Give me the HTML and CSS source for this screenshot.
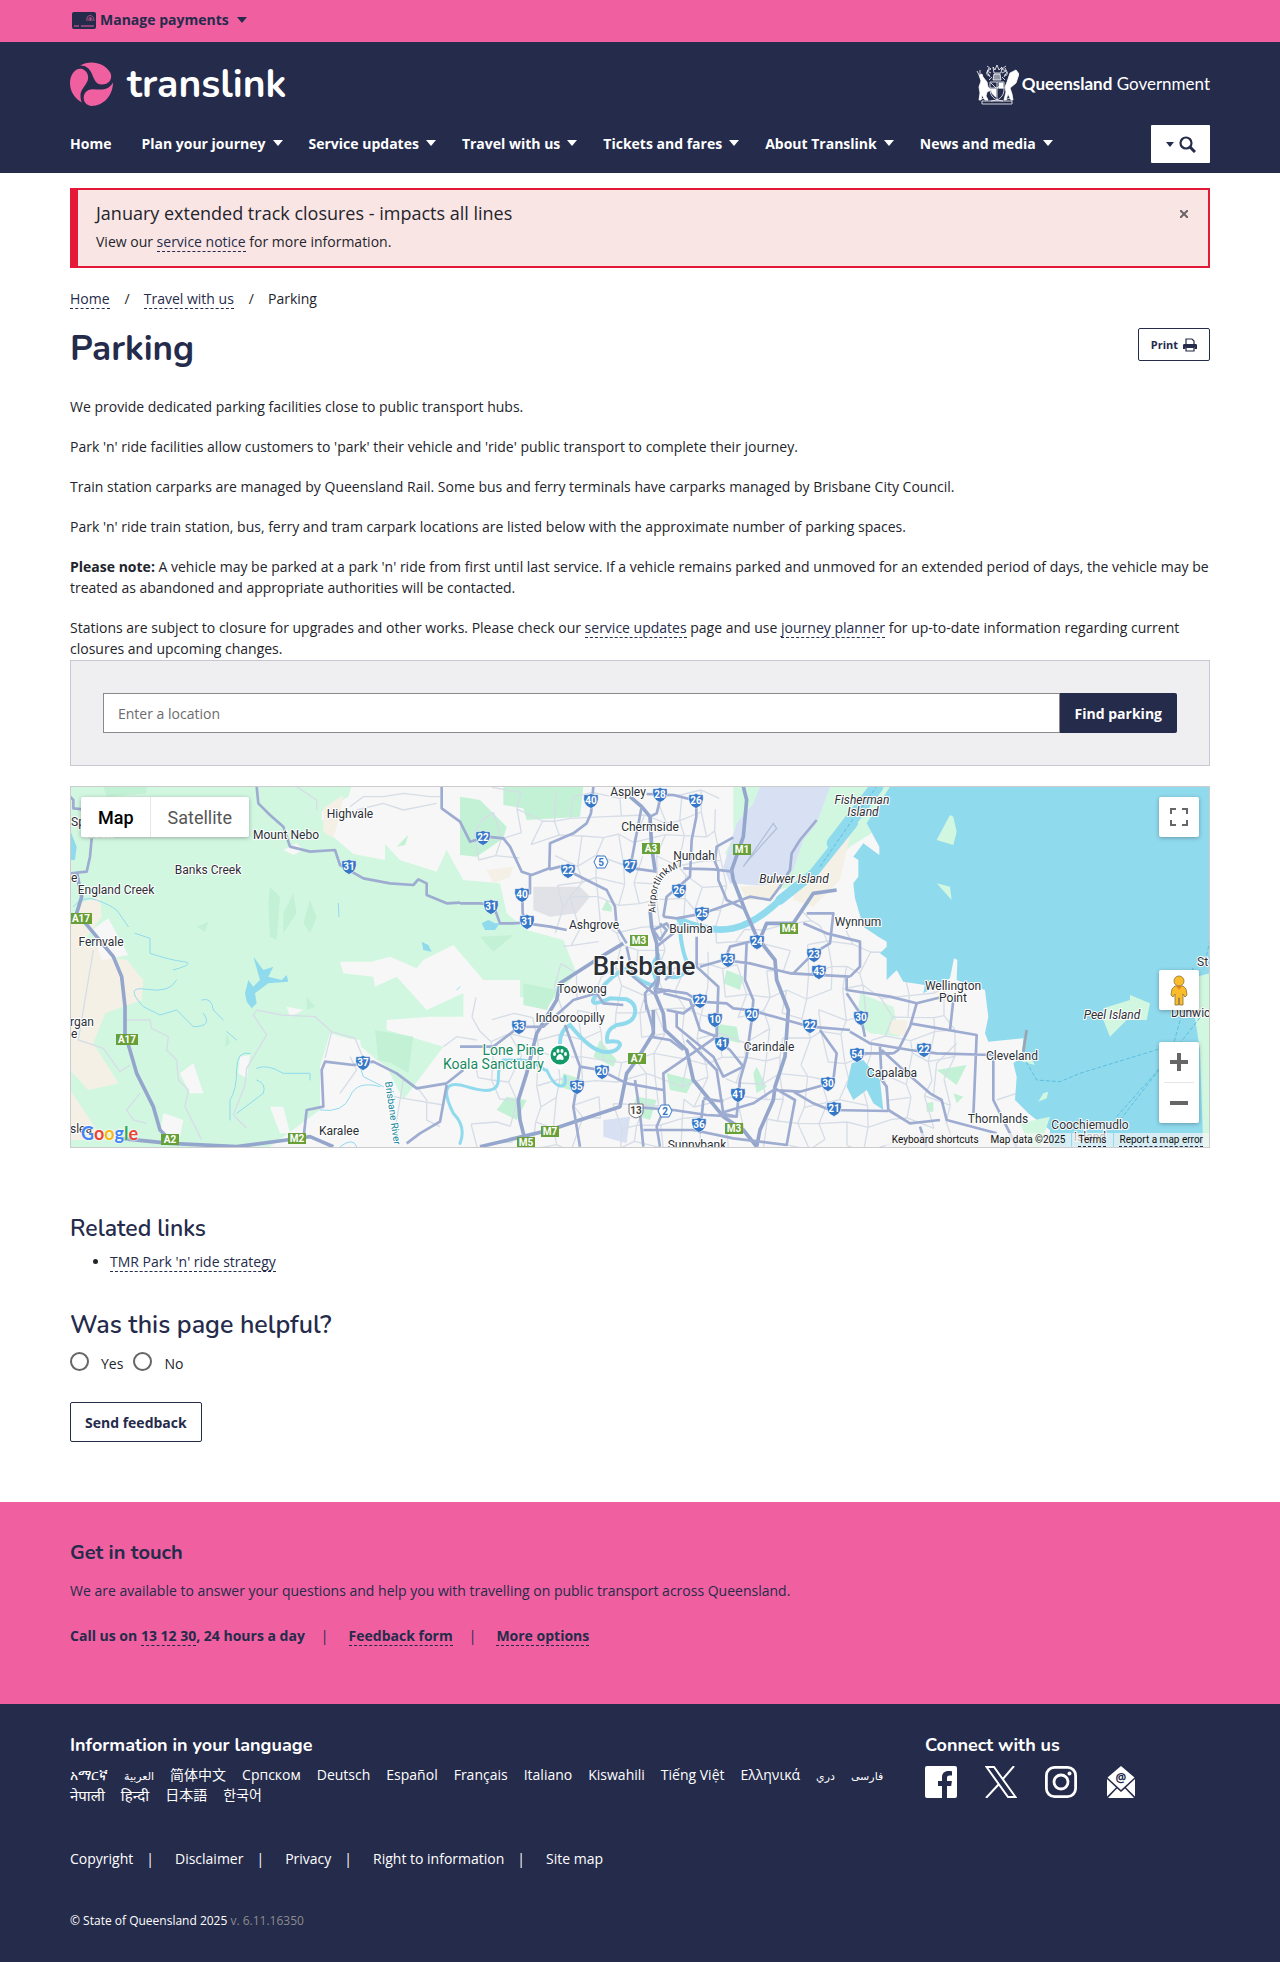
FILE: index.html
```html
<!DOCTYPE html>
<html lang="en">
<head>
<meta charset="utf-8">
<title>Parking | Translink</title>
<meta name="viewport" content="width=device-width, initial-scale=1">
<link rel="stylesheet" href="styles.css">
</head>
<body>
<div class="topbar">
  <div class="container">
    <button class="payments" type="button">
      <svg class="card-icon" viewBox="0 0 24 17" aria-hidden="true"><rect width="24" height="17" rx="2" fill="#252b4b"/><path d="M2 14h5M9 14h13" stroke="#f060a1" stroke-width="1"/><path d="M15 7c0-5 7-5 7 2M17 9V7c0-3 3-2 3 2M18.500 6v3M15 9v-2" fill="none" stroke="#f060a1" stroke-width=".7"/></svg>
      Manage payments <span class="caret"></span>
    </button>
  </div>
</div>
<header class="masthead">
  <div class="container">
    <div class="brand-row">
      <a class="brand" href="#">
        <svg class="brand-mark" viewBox="0 0 43 44" aria-hidden="true" fill="#f060a1"><path d="M10 3.500C20-2 34 0 40.500 11C43 18 38 23 31 22.500C25 22 24 16 21 10C19 6 15 3 10 3.500Z"/><path d="M12.500 7C17 9 19.500 14 17.500 19C15 25 10 28 10.500 34C10.500 37 11 39 12 40.500C4 36 0 29 0 21C0 13 5 5 12.500 7Z"/><path d="M43 20.500C43 32 35 44 21 44C14 43 12 36 15 31C19 25 25 28 32 27.500C38 27 41 24 43 20.500Z"/></svg>
        <span class="brand-name">translink</span>
      </a>
      <a class="govt" href="#">
        <svg class="crest" viewBox="0 0 43 42" aria-hidden="true" fill="none" stroke="#fff" stroke-width=".8"><path d="M17 4l2 3 2-5 2 5 3-3-1 6h-7zM11 3l4 3-4 2 4 2M30 3l-4 3 4 2-4 2M14 12c-3 1-4-1-3-3M28 12c3 1 4-1 3-3M13 5l-2 4 3 5M29 5l2 4-3 5M16 14l-3 3M26 14l3 3M1 8l2 4M4 7l0 4"/><path d="M18 11h6l1 6h-8z" fill="#fff" fill-opacity=".5"/><path d="M14 19h14v7c0 6-3 9-7 11c-4-2-7-5-7-11zM21 19v18M14 25h14M15 20l5 5M27 20l-6 5"/><path d="M15 26h5v8c-3-2-5-4-5-8zM23 20h4v5h-4z" fill="#fff"/><path d="M3 12l3-1 1 3 4 5 1 5 3 3-4 2-1 4 2 4H9l-3-5-1 5H3l1-7-1-6 2-6z" fill="#fff"/><path d="M31 19l3-9 6-3 3 4-3 9-6 5 2 6 1 6h-2l-3-6-2 6h-2l2-8-1-5z" fill="#fff"/><path d="M6 38h30v3H6zM5 36c3-1 5-1 7 1M37 36c-3-1-5-1-7 1M15 38q6-2 12 0" /></svg>
        <span class="govt-name"><b>Queensland</b> Government</span>
      </a>
    </div>
    <nav class="nav-row" aria-label="Main">
      <ul class="nav">
        <li><a href="#">Home</a></li>
        <li><a href="#">Plan your journey<span class="caret"></span></a></li>
        <li><a href="#">Service updates<span class="caret"></span></a></li>
        <li><a href="#">Travel with us<span class="caret"></span></a></li>
        <li><a href="#">Tickets and fares<span class="caret"></span></a></li>
        <li><a href="#">About Translink<span class="caret"></span></a></li>
        <li><a href="#">News and media<span class="caret"></span></a></li>
      </ul>
      <button class="search-toggle" type="button" aria-label="Search"><span class="caret small"></span><svg width="17" height="17" viewBox="0 0 17 17" fill="none" stroke="#252b4b" aria-hidden="true"><circle cx="7" cy="7" r="5.500" stroke-width="2.200"/><path d="M11 11l5 5" stroke-width="3"/></svg></button>
    </nav>
  </div>
</header>

<main class="container">
  <section class="alert">
    <div>
      <h2 class="alert-title">January extended track closures - impacts all lines</h2>
      <p>View our <a class="link" href="#">service notice</a> for more information.</p>
    </div>
    <button class="alert-close" type="button" aria-label="Close"><svg width="8" height="8" viewBox="0 0 8 8" stroke="#6b6468" stroke-width="2" aria-hidden="true"><path d="M0 0l8 8M8 0l-8 8"/></svg></button>
  </section>

  <nav aria-label="Breadcrumb">
    <ol class="crumbs">
      <li><a class="link" href="#">Home</a></li>
      <li><a class="link" href="#">Travel with us</a></li>
      <li>Parking</li>
    </ol>
  </nav>

  <div class="title-row">
    <h1>Parking</h1>
    <button class="print" type="button">Print <svg width="14" height="14" viewBox="0 0 14 14" aria-hidden="true"><path d="M3 6V1h6l2 2v3" fill="none" stroke="#252b4b" stroke-width="1.200"/><path d="M0 7.500C0 6.500.5 6 1.500 6h11c1 0 1.500.5 1.500 1.500V11h-2.500V9h-9v2H0z" fill="#252b4b"/><path d="M3 9.500h8v3.500H3z" fill="none" stroke="#252b4b" stroke-width="1.200"/></svg></button>
  </div>

  <div class="copy">
    <p>We provide dedicated parking facilities close to public transport hubs.</p>
    <p>Park 'n' ride facilities allow customers to 'park' their vehicle and 'ride' public transport to complete their journey.</p>
    <p>Train station carparks are managed by Queensland Rail. Some bus and ferry terminals have carparks managed by Brisbane City Council.</p>
    <p>Park 'n' ride train station, bus, ferry and tram carpark locations are listed below with the approximate number of parking spaces.</p>
    <p><strong>Please note:</strong> A vehicle may be parked at a park 'n' ride from first until last service. If a vehicle remains parked and unmoved for an extended period of days, the vehicle may be treated as abandoned and appropriate authorities will be contacted.</p>
    <p>Stations are subject to closure for upgrades and other works. Please check our <a class="link" href="#">service updates</a> page and use <a class="link" href="#">journey planner</a> for up-to-date information regarding current closures and upcoming changes.</p>
  </div>

  <form class="finder">
    <input type="text" placeholder="Enter a location" aria-label="Enter a location">
    <button type="button">Find parking</button>
  </form>

  <section class="map" aria-label="Parking map">
    <svg class="map-canvas" viewBox="1 7 1138 360" preserveAspectRatio="xMidYMid slice">
      <defs>
        <path id="shield-blue" d="M-7 -6.500Q-3.500 -5.500 0 -7.500Q3.500 -5.500 7 -6.500Q9 4 0 7.500Q-9 4 -7 -6.500Z" fill="#3777c8" stroke="#f7f7f7" stroke-width=".6"/>
        <path id="airport-tunnel" d="M586 133Q583 108 596 95Q606 86 640 80"/>
      </defs>
      <g transform="scale(.33333)">
        <rect width="3420" height="1110" fill="#f7f7f7"/>
        <path class="park-light" d="M0 0H850L835 50 755 95 755 120 795 130 790 170 850 222 945 240 945 192 990 240 1100 275 1130 210 1180 300 1290 310 1310 400 1370 450 1480 480 1520 580 1440 670 1350 650 1350 600 1240 600 1150 495 1060 540 1040 565 960 530 905 545 810 545 820 580 910 590 915 620 980 590 1070 690 1180 640 1180 710 1080 710 950 720 950 750 1020 770 1120 800 1000 960 950 860 920 840 850 780 780 760 750 860 750 990 600 1100 0 1110Z"/>
        <path d="M1350 190l80 0 5 75-50 20-20 50-20-20-90-10-50-50z" fill="#f7f7f7"/>
        <path class="park-light" d="M1990 20H2500L2420 150 2340 200 2260 300 2120 330 1995 260 1965 220 1990 170Z"/>
        <g class="park">
          <path d="M1170 50l60 10 80 80-10 35-80 55-50-5zM1300 20h240l-10 90-160 10-10-35-60-10zM600 320l30 30-10 130-20-10-5-100zM915 750l115 20-15 110-50-30-40-10zM100 20h130v20l-120 10zM1230 470l100-5-60 50zM1360 610l100 20-30 60-70-15zM1930 730l70 10 10 50-70-20zM1480 880l60 20-10 40-60-20zM1700 950l60 10-20 60-60-20zM1310 950l60 10-30 60-60-30zM1590 780l50 60-10 20-60-30zM1790 880l80 20-20 40-50-10zM380 440l35-15-10 30zM710 650l25 30-25 10zM470 760l10 30-15 10zM1610 360l15 20v15l-30-5zM2600 870l90-15-30 60zM2650 940l30 10-20 20zM2570 970l20-5v30l-20 0zM640 400l30-60 10 60-40 60zM700 430l20-70 20 50-20 50zM980 200l35-35-10 30z"/>
          <path d="M2370 640l100 40 20 90-90-10-40-30z" fill="#d2f7e1"/>
          <path d="M2030 160l40-90 30 30-30 60zM1970 570l50 20-10 40-50-20zM2060 860l30 60-30 20-10-60z"/>
        </g>
        <g fill="#d8e1f3"><path d="M2070 20h210l-40 110-40 50-30 90-60 50-130-10-20-50 40-130 50-60z"/><path d="M1600 1020l80-10-10 80-70-20z"/></g>
        <path d="M1390 320l140 0 30 30-40 50-80 10-50-20z" fill="#e1e2e7"/>
        <g fill="#f5f0e5">
          <path d="M30 370l60-20 5 60-45 60 60 60 60 10 50 60-5 60-110 40-35 90 75 120-90 20-55-60V440zM0 930l20 30 80 120H0zM760 85l60-40-10 60-20 70-30-20z"/>
          <path d="M2010 320l120-10-20 50-80 0zM2170 300l80-40 40-90 50 0-30 130-80 80-60-20zM2460 720l50 0 0 50-50-10zM1250 270l80-10-10 30-50 20z"/>
        </g>
        <g fill="#f7f7f7">
          <path d="M65 450l50-35 60 110-80 15zM640 210l40-20 20 20-30 15zM650 680l50 10-40 20zM280 1000l60 20-10 50-60-10zM330 880l40-30 30 90-40 0zM510 830l30-5-10 70-25-15zM600 980l40 0 20 80-30 0zM780 770l90 10 10 60-90 10zM770 870l80 0 40 60-80 50-40 0z"/>
        </g>
        <g id="minor-roads" class="minor"></g>
        <g class="minor">
          <path d="M170 720h70l5 25 50 25-5 40 30 30 5 60 30 30-10 50 50 100M70 510L25 780l75 25 50 70 30-20M560 690l-10 15 40 60-60 100-5 50-35 90 40 40M560 690l75 15 100 5 50 45-20 80M785 755l70 20 25 60M840 830l20 40-50 70M680 20l60 40v30M840 80l40-30h60l60-10 80 10h30M860 90l80-20 60 20 100-20M1000 900l-30 180M1040 920l30 40v60l40 20M970 950l150 25M1120 800l40-30 60 10M210 940l-40 50 20 30 40 10M2780 960l60-20M2590 950l10-100 60-60"/>
        </g>
        <g class="water">
          <path d="M2460 20L2390 130 2428 200 2428 225 2380 190 2350 230 2365 240V290L2350 310 2355 355 2380 440 2425 470 2450 485 2450 500 2430 520 2450 535V600L2480 570 2500 605 2565 615 2560 640 2640 595 2652 535 2662 540 2660 600 2745 630 2755 710 2745 760 2755 785 2860 775 2855 830 2830 850 2840 890 2835 960 2875 1000 2900 1020 2940 1050V1100H3420V20Z"/>
          <path d="M2345 850l35-10 50 60 10 90-30-20-20-40-40 30-20-40zM525 640l10-40 15 20 20-20-20-70 30 40 30-10-15 30 40 10 15-15 5 20-60 5-40 30 5 30-15 15-15-20zM515 685l20 8zM1055 485l20 10 10 20-25-5zM1235 430l20-10 20 10 15 0-15 20-30 0zM0 150l20 50-5 40-15 0z"/>
        </g>
        <g class="river">
          <path stroke-width="40" d="M2420 20L2290 190"/><path stroke-width="28" d="M2350 130L2230 280 2130 360"/>
          <path stroke-width="20" d="M2140 350Q2060 430 1990 445T1830 420"/>
          <path stroke-width="12" d="M1840 420Q1825 435 1835 490T1860 560Q1830 600 1800 590T1765 530Q1740 550 1755 590T1720 605T1670 565Q1630 580 1585 635T1620 655L1670 658Q1700 670 1695 700T1640 735Q1605 750 1612 785Q1650 780 1650 795Q1640 820 1600 815T1500 735Q1470 750 1470 790"/>
          <path stroke-width="9" d="M1430 870Q1450 915 1470 918T1485 890M1425 870Q1380 835 1340 840H1300Q1285 850 1285 900T1190 920T1150 1000Q1190 1040 1170 1090"/>
          <path stroke-width="3" d="M10 380Q40 345 80 360T140 390L175 440M195 460L240 475V520Q300 540 340 545T310 570M320 600Q300 640 230 628T220 680L270 705 320 690 370 740Q430 740 400 700M395 660Q425 650 430 690L460 720M500 780L470 755M540 820Q500 810 500 870T480 960V1020M560 865Q590 850 640 880L720 880V900M560 900Q590 910 580 940L500 1000M750 990Q820 1000 840 950T930 920M810 1100Q850 1070 860 1100M870 860L880 890 940 920M805 370l2 40M1160 630l10-10"/>
        </g>
        <g fill="#d2f7e1"><path d="M2640 105l10 5 10 45-10 40-50-15zM2600 310l40 10 5 40zM3100 685l80-25 0-15 60 25-10 50-60 0-50 50-20-50zM3380 590l40-10V1110h-20l-10-300-20-130zM2840 840l40-10 15 25zM2920 940l15-5-5 20-25 10zM2850 1030l90-20-30 90h-30z"/></g>
        <g class="ferry"><path d="M2860 830l40 70 70 5 60-25 260-80M3140 1010l160-180 50-180 20-90M3150 1020L3400 700M3420 480l-20 90M2250 260L2340 130 2420 20"/></g>
        <g id="major-roads" class="major">
          <path d="M2020 20L2030 60 2020 170 1985 270 1990 300 2025 390 2060 470 2115 540 2120 600 2155 690 2145 830 2115 920 2110 960 2070 1050 2060 1100"/>
          <path d="M1680 50L1715 80 1740 110 1745 200 1755 270M1740 390L1745 440 1760 490 1765 600 1755 640 1780 700 1785 750 1850 810 1870 900 1960 1010 2020 1050 2060 1100"/>
          <path d="M1660 490L1610 520 1470 610 1460 660 1400 760 1370 880 1345 960 1350 1020 1370 1100M1230 1100L1440 1050 1650 980 1670 880 1700 840 1750 760 1750 690"/>
          <path d="M20 280L35 350 20 400 55 440 130 530 155 590 165 680 165 760 200 880 250 980 270 1050 300 1080M150 1075L300 1090 500 1100 650 1080 720 1070 790 1100"/>
          <path d="M2060 500L2090 430 2170 430 2230 340 2300 330"/>
        </g>
        <g class="arterial">
          <path d="M1570 20L1563 100 1550 130 1510 160 1440 190 1438 265 1385 285 1355 275 1320 200 1300 175 1250 170 1200 185 1170 125 1115 85V20M1438 268L1470 260 1520 285 1610 330 1635 380 1640 440 1670 490M1380 285V340L1357 346 1358 400 1370 430 1440 440 1490 450M1170 370H1230L1270 375 1290 430H1330L1370 427"/>
          <path d="M1730 42L1810 45 1890 65M1879 60V110L1865 180 1860 290 1790 350 1780 410M1715 80L1700 160 1685 240 1690 265 1760 275M1740 110l20-10 15-60M1840 265L1930 268 1990 275M1945 270V300L1970 360 2020 385M1990 172L1940 200 1935 245 1945 270M1780 410L1820 415 1900 400 2040 350 2100 360 2130 320 2160 270 2165 220 2190 180 2240 120"/>
          <path d="M1670 500L1690 590 1750 640 1800 630M1750 625L1850 640 1890 665 1970 670 1990 685 2040 690 2130 715 2220 740 2340 750M2060 480L1980 500 1960 550M2030 490L2025 600 2050 660 2045 720 2030 830 2010 900 2000 1010M1890 560L1960 540 2040 550 2160 580 2340 590M2170 580L2230 520 2280 490 2290 400 2210 400M2200 430L2270 460 2370 485V560L2340 590M2330 590V630L2460 650 2540 670 2640 645"/>
          <path d="M1485 735L1530 860 1510 980 1530 1100M1530 860L1590 870 1670 910 1780 930M1880 470V560L1945 620 1940 770 1780 880 1785 980 1760 1040 1770 1100M1680 980L1810 990 1910 1005 2000 1010 1950 1000 2050 970 2110 930 2190 935 2275 911M2170 935L2230 970 2280 990 2455 993M2115 925L2175 960 2150 1095 1990 1075 1870 1050 1720 1050M1695 900L1710 1000 1720 1100M1170 800H1270L1347 741 1420 740 1510 660 1580 640 1600 670 1660 675"/>
          <path d="M1740 770L1800 780 1840 810M1820 700V740L1930 830 1960 890 2020 860 1980 810 1940 780M1850 780L1940 870 1960 1000M1790 690L1840 700 1880 670M1780 640L1860 660 1890 750 1940 770M1730 690L1725 640 1760 600M1725 660L1750 750M1770 430L1790 450 1770 480 1750 450 1790 430 1810 460 1760 500M1785 600L1810 580 1790 560M1900 960L1890 1060M1900 955L1960 965"/>
          <path d="M2540 670L2520 740 2485 810 2470 820M2520 730L2720 765 2710 1010M2340 755L2400 790 2520 810 2600 820 2770 825V960L2820 1060 2840 1100M2340 820H2470M2430 800L2435 900 2450 920 2455 990 2520 1030 2610 1020M2435 810L2500 870 2580 940 2615 960 2630 1020 2780 1060M2550 1040L2570 1100M2650 660L2640 750M2330 640L2370 700 2385 770M2250 750L2300 820 2290 900"/>
          <path d="M0 50L10 60V85L60 90M65 175L60 230 50 275 0 280M560 20L565 70 600 105 640 140 660 200 720 215 795 210 810 255 880 295 960 310 1030 315 1045 298 1070 310V345L1130 370 1170 368M700 1080L710 990 760 980 755 870 765 845 850 855 910 845 980 880 1040 925 1130 910 1180 870M1130 915L1110 1025 1050 1060 1010 1090"/>
        </g>
        <path class="minor runway" d="M2020 260L2110 130l10 15-80 90z"/>
        <path d="M2860 815L2870 750" stroke="#9ba5b2" stroke-width="8"/>
      </g>
      <g id="map-markers"></g>
      <path d="M479 275a11 11 0 1 1 22 0q0 7-6 9l-5 6-5-6q-6-2-6-9z" fill="#fff"/>
      <circle cx="490" cy="275" r="9.500" fill="#129a69"/>
      <g fill="#fff"><ellipse cx="484.500" cy="274" rx="1.500" ry="2"/><ellipse cx="488" cy="271" rx="1.500" ry="2"/><ellipse cx="492" cy="271" rx="1.500" ry="2"/><ellipse cx="495.500" cy="274" rx="1.500" ry="2"/><path d="M490 274c3 0 5 6 2.500 6q-2.500-1-5 0c-2.500 0-.5-6 2.500-6z"/></g>
      <g id="map-labels"></g>
      <text class="place road-name"><textPath href="#airport-tunnel">AirportlinkM7</textPath></text>
      <text class="place river-name" transform="translate(315 302) rotate(82)">Brisbane River</text>
    </svg>
    <div class="map-types"><button class="on" type="button">Map</button><button type="button">Satellite</button></div>
    <button class="map-btn full" type="button" aria-label="Toggle fullscreen"><svg width="18" height="18" viewBox="0 0 18 18" fill="none" stroke="#666" stroke-width="2" aria-hidden="true"><path d="M1 6V1h5M12 1h5v5M17 12v5h-5M6 17H1v-5"/></svg></button>
    <div class="map-side">
      <button class="map-btn" type="button" aria-label="Street View"><svg width="18" height="31" viewBox="0 0 18 31" fill="#fbbc2c" stroke="#8a7233" stroke-width=".8" aria-hidden="true"><path d="M5 11h8l3 3 1 6-2 2-2-3v11H9.500V23h-1v7H5V19l-2 3-2-2 1-6z"/><path d="M6 11h6l-3 4z" fill="#e8862b" stroke="none"/><circle cx="9" cy="6" r="5"/></svg></button>
      <div class="zoom">
        <button type="button" aria-label="Zoom in"><svg width="18" height="18" viewBox="0 0 18 18" aria-hidden="true"><path d="M9 0v18M0 9h18" stroke="#666" stroke-width="4"/></svg></button>
        <button type="button" aria-label="Zoom out"><svg width="18" height="18" viewBox="0 0 18 18" aria-hidden="true"><path d="M0 9h18" stroke="#666" stroke-width="4"/></svg></button>
      </div>
    </div>
    <div class="google" aria-label="Google"><span class="g-blue">G</span><span class="g-red">o</span><span class="g-yellow">o</span><span class="g-blue">g</span><span class="g-green">l</span><span class="g-red">e</span></div>
    <div class="attribution"><span>Keyboard shortcuts</span><span>Map data ©2025</span><a href="#">Terms</a><a href="#">Report a map error</a></div>
  </section>

  <section class="related">
    <h2>Related links</h2>
    <ul><li><a class="link" href="#">TMR Park 'n' ride strategy</a></li></ul>
  </section>

  <form class="helpful">
    <fieldset>
      <legend>Was this page helpful?</legend>
      <div class="choices">
        <input type="radio" name="helpful" id="yes"><label for="yes">Yes</label>
        <input type="radio" name="helpful" id="no"><label for="no">No</label>
      </div>
    </fieldset>
    <button class="outline" type="button">Send feedback</button>
  </form>
</main>

<section class="touch">
  <div class="container">
    <h2>Get in touch</h2>
    <p>We are available to answer your questions and help you with travelling on public transport across Queensland.</p>
    <ul class="touch-links">
      <li>Call us on <a class="link" href="#">13 12 30</a>, 24 hours a day</li>
      <li><a class="link" href="#">Feedback form</a></li>
      <li><a class="link" href="#">More options</a></li>
    </ul>
  </div>
</section>

<footer class="footer">
  <div class="container">
    <div class="footer-top">
      <section class="languages">
        <h2>Information in your language</h2>
        <ul>
          <li><a href="#" lang="am">አማርኛ</a></li><li><a href="#" lang="ar">العربية</a></li><li><a href="#" lang="zh-Hans">简体中文</a></li><li><a href="#">Српском</a></li><li><a href="#">Deutsch</a></li><li><a href="#">Español</a></li><li><a href="#">Français</a></li><li><a href="#">Italiano</a></li><li><a href="#">Kiswahili</a></li><li><a href="#">Tiếng Việt</a></li><li><a href="#">Ελληνικά</a></li><li><a href="#" lang="fa">دري</a></li><li><a href="#" lang="fa">فارسی</a></li><li><a href="#" lang="ne">नेपाली</a></li><li><a href="#" lang="hi">हिन्दी</a></li><li><a href="#" lang="ja">日本語</a></li><li><a href="#" lang="ko">한국어</a></li>
        </ul>
      </section>
      <section class="connect">
        <h2>Connect with us</h2>
        <div class="social">
          <a href="#" aria-label="Facebook"><svg viewBox="0 0 32 32"><path fill="#fff" d="M2 0h28a2 2 0 0 1 2 2v28a2 2 0 0 1-2 2h-8V20h4.200l.7-5H22v-3c0-1.600.6-2.500 2.600-2.500H27V5.200C26.400 5.100 25 5 23.300 5C19.700 5 17 7.200 17 11.300V15h-4v5h4v12H2a2 2 0 0 1-2-2V2a2 2 0 0 1 2-2z"/></svg></a>
          <a href="#" aria-label="X"><svg viewBox="0 0 32 32"><path d="M1.500 1h7.500l21.500 30H23zM29 0L17.500 13.500M14 18L1 32" fill="none" stroke="#fff" stroke-width="2"/></svg></a>
          <a href="#" aria-label="Instagram"><svg viewBox="0 0 32 32" fill="none" stroke="#fff" stroke-width="2.800"><rect x="1.400" y="1.400" width="29.200" height="29.200" rx="8"/><circle cx="16" cy="16" r="7"/><circle cx="24.500" cy="7.500" r="2" fill="#fff" stroke="none"/></svg></a>
          <a href="#" aria-label="Email newsletter"><svg viewBox="0 0 32 32"><path d="M16 0l13.500 11.500L16 24 2.500 11.500z" fill="#fff"/><path d="M2 13l9 8.500-9 9zM30 13l-9 8.500 9 9zM3 32l9-9.500 4 3.500 4-3.500 9 9.500z" fill="#fff"/><text class="at" x="16" y="16">@</text></svg></a>
        </div>
      </section>
    </div>
    <ul class="legal">
      <li><a href="#">Copyright</a></li><li><a href="#">Disclaimer</a></li><li><a href="#">Privacy</a></li><li><a href="#">Right to information</a></li><li><a href="#">Site map</a></li>
    </ul>
    <p class="copyright">© State of Queensland 2025 <span>v. 6.11.16350</span></p>
  </div>
</footer>
<script src="map.js"></script>
</body>
</html>
```
FILE: styles.css
```css
* { box-sizing: border-box; }
:root { --navy: #252b4b; --pink: #f060a1; --ink: #23242b; }
body { margin: 0; background: #fff; color: var(--ink); font: 14px/21px "Open Sans", "Noto Sans", "Noto Sans CJK SC", "DejaVu Sans", sans-serif; }
h1, h2, p, ul, ol, fieldset { margin: 0; padding: 0; border: 0; }
ul, ol { list-style: none; }
button, input { font: inherit; }
button { cursor: pointer; }
a { color: inherit; text-decoration: none; }
h1, h2, legend { font-family: Nunito, Lato, "Open Sans", sans-serif; font-weight: 650; color: var(--navy); }
.container { max-width: 1170px; margin: 0 auto; padding: 0 15px; }
.link { color: var(--navy); border-bottom: 1px dashed var(--navy); }
.caret { display: inline-block; border: 5px solid transparent; border-top: 6px solid; border-bottom: 0; }
.caret.small { border-width: 4px; border-top-width: 5px; border-bottom: 0; }

.topbar { background: var(--pink); height: 42px; }
.payments { display: flex; align-items: center; gap: 4px; padding: 10px 0 11px 2px; border: 0; background: none; color: var(--navy); font-weight: 700; line-height: 20px; }
.payments .caret { margin-left: 4px; }
.card-icon { width: 24px; height: 17px; }

.masthead { background: var(--navy); color: #fff; padding: 20px 0 10px; }
.brand-row { display: flex; justify-content: space-between; height: 44px; }
.brand { display: flex; align-items: center; gap: 14px; }
.brand-mark { width: 43px; height: 44px; }
.brand-name { font: 700 39px/44px Nunito, Lato, sans-serif; padding-top: 2px; }
.govt { display: flex; align-items: center; gap: 3px; }
.crest { width: 43px; height: 42px; }
.govt-name { font: 17px/20px Lato, sans-serif; }
.nav-row { display: flex; justify-content: space-between; align-items: center; margin-top: 19px; height: 38px; }
.nav { display: flex; gap: 26px; padding-bottom: 2px; font-weight: 700; }
.nav li:first-child { padding-right: 4px; }
.nav a { display: flex; align-items: center; gap: 7px; }
.search-toggle { display: flex; align-items: center; justify-content: center; gap: 5px; width: 59px; height: 38px; border: 0; border-radius: 1px; background: #fff; color: var(--navy); }

.alert { display: flex; justify-content: space-between; align-items: flex-start; margin-top: 15px; padding: 10px 18px 14px; border: 2px solid #e31937; border-left-width: 8px; background: #f9e5e4; }
.alert-title { font: 400 18px/26px "Open Sans", sans-serif; color: var(--ink); }
.alert p { margin-top: 5px; }
.alert-close { display: flex; padding: 10px 2px; border: 0; background: none; }

.crumbs { display: flex; margin-top: 20px; }
.crumbs li + li::before { content: "/"; padding: 0 14px 0 15px; }
.title-row { display: flex; justify-content: space-between; align-items: flex-start; margin-top: 19px; }
h1 { font-size: 35px; line-height: 42px; font-weight: 700; }
.print { display: flex; align-items: center; gap: 5px; height: 33px; padding: 0 12px; border: 1px solid var(--navy); border-radius: 2px; background: #fff; color: var(--navy); font-size: 11px; font-weight: 700; }

.copy { display: flex; flex-direction: column; gap: 19px; margin-top: 26px; padding-bottom: 1px; }
.finder { display: flex; padding: 32px; background: #efeff1; border: 1px solid #c8c8d3; }
.finder input { flex: 1; min-width: 0; height: 40px; padding: 0 14px; border: 1px solid #8a8a8a; border-radius: 0; background: #fff; }
.finder input::placeholder { color: #6c6c6c; opacity: 1; }
.finder button { padding: 0 15px; border: 0; border-radius: 0 2px 2px 0; background: var(--navy); color: #fff; font-weight: 700; }

.map { position: relative; margin-top: 20px; border: 1px solid #ccc; overflow: hidden; font-family: Roboto, sans-serif; }
.map-canvas { display: block; width: 100%; height: 360px; }
.park-light { fill: #d2f7e1; }
.park { fill: #c3f1d5; }
.water { fill: #90daee; }
.river { fill: none; stroke: #90daee; stroke-linecap: round; }
.ferry { fill: none; stroke: #5bbfdc; stroke-width: 3; stroke-dasharray: 12 6; }
.minor { fill: none; stroke: #d6dde7; stroke-width: 4; }
.runway { stroke: #b3bfd9; }
.arterial { fill: none; stroke: #9dacd0; stroke-width: 8; stroke-linejoin: round; }
.major { fill: none; stroke: #95a6cd; stroke-width: 11; stroke-linejoin: round; }
.place { font: 400 12px Roboto, sans-serif; fill: #2b2f36; stroke: #fff; stroke-width: 2px; paint-order: stroke; stroke-linejoin: round; }
.place.city { font-size: 26px; font-weight: 500; }
.place.isle { font-style: italic; }
.place.poi { font-size: 14px; fill: #178a62; }
.place.road-name, .place.river-name { font-size: 10px; }
.place.river-name { fill: #1687a0; }
.marker { font: 700 10px Roboto, sans-serif; fill: #fff; text-anchor: middle; }
.marker.dark { fill: #444; }
.marker.blue { fill: #3777c8; }
.map button { border: 0; background: #fff; }
.map-types { position: absolute; left: 10px; top: 10px; display: flex; box-shadow: 0 1px 4px rgba(0, 0, 0, .3); border-radius: 2px; overflow: hidden; }
.map-types button { height: 40px; padding: 0 17px; font-size: 18px; color: #565656; }
.map-types .on { padding-right: 16px; color: #000; font-weight: 500; border-right: 1px solid #e6e6e6; }
.map-btn { display: flex; align-items: center; justify-content: center; width: 40px; height: 40px; padding: 0; border-radius: 2px; box-shadow: 0 1px 4px rgba(0, 0, 0, .3); }
.map-btn.full { position: absolute; right: 10px; top: 10px; }
.map-side { position: absolute; right: 10px; bottom: 24px; display: flex; flex-direction: column; gap: 32px; }
.zoom { display: flex; flex-direction: column; width: 40px; padding: 0 5px; border-radius: 2px; background: #fff; box-shadow: 0 1px 4px rgba(0, 0, 0, .3); }
.zoom button { display: flex; align-items: center; justify-content: center; height: 40px; padding: 0; }
.zoom button + button { height: 41px; border-top: 1px solid #e6e6e6; }
.google { position: absolute; left: 10px; bottom: 3px; font: 700 18px/22px Lato, sans-serif; text-shadow: 0 0 2px #fff, 0 0 2px #fff; }
.g-blue { color: #4285f4; } .g-red { color: #ea4335; } .g-yellow { color: #f5b912; } .g-green { color: #34a853; }
.attribution { position: absolute; right: 0; bottom: 0; display: flex; gap: 1px; font-size: 10px; line-height: 14px; color: #111; }
.attribution > * { padding: 0 6px; background: rgba(245, 245, 245, .7); }
.attribution > :first-child { padding-right: 5px; }
.attribution a { text-decoration: underline dashed var(--navy); text-underline-offset: 3px; }

.related { margin-top: 67px; }
h2 { font-size: 23px; line-height: 28px; }
.related ul { margin-top: 8px; padding-left: 40px; list-style: disc; }
.helpful { margin-top: 38px; }
legend { padding: 0; font-size: 25px; line-height: 30px; }
.choices { display: flex; align-items: flex-start; gap: 12px; margin-top: 12px; }
.choices label { padding-top: 1px; }
.choices input { appearance: none; width: 19px; height: 19px; margin: 0; border: 2px solid #666; border-radius: 50%; background: #fff; }
.choices input:checked { background: #666; }
.choices label + input { margin-left: -2px; }
.outline { margin-top: 28px; height: 40px; padding: 0 14px; border: 1px solid var(--navy); border-radius: 2px; background: #fff; color: var(--navy); font-weight: 700; }

.touch { margin-top: 60px; padding: 38px 0 58px; background: var(--pink); color: var(--navy); }
.touch h2 { font-size: 20px; line-height: 26px; font-weight: 700; }
.touch p { margin-top: 14px; }
.touch-links { display: flex; margin-top: 24px; font-weight: 700; }
.touch-links li + li::before { content: "|"; padding: 0 20px 0 16px; font-weight: 400; }

.footer { padding: 28px 0 31px; background: var(--navy); color: #fff; }
.footer h2 { color: #fff; font-size: 18px; font-weight: 700; line-height: 26px; }
.footer-top { display: grid; grid-template-columns: 3fr 1fr; }
.languages { padding-right: 15px; }
.languages ul { display: flex; flex-wrap: wrap; column-gap: 16px; margin-top: 7px; line-height: 20px; }
.languages li { height: 20px; }
[lang="ar"], [lang="fa"] { font-size: 11px; }
[lang="ne"], [lang="hi"] { font-size: 15px; }
.social { display: flex; gap: 28px; margin-top: 8px; }
.social a, .social svg { display: block; width: 32px; height: 32px; }
.at { font: 700 12px "Open Sans", sans-serif; text-anchor: middle; fill: var(--navy); }
.legal { display: flex; margin-top: 43px; }
.legal li + li::before { content: "|"; padding: 0 21px 0 13px; }
.copyright { margin-top: 41px; font-size: 12px; }
.copyright span { color: #8c8c8c; }
```
FILE: map.js
```js
// Route markers and place names for the Brisbane map.
const NS = 'http://www.w3.org/2000/svg';
const make = (tag, attrs, parent, text) => {
  const el = document.createElementNS(NS, tag);
  for (const k in attrs) el.setAttribute(k, attrs[k]);
  if (text) el.textContent = text;
  parent.appendChild(el);
  return el;
};
const markers = document.getElementById('map-markers');
const labels = document.getElementById('map-labels');

const shields = [[31,279,87],[37,293,283],[40,521,21],[28,590,15],[26,626,21],[22,413,58],[27,560,86],[22,498,91],[40,452,115],[31,421,127],[31,457,142],[26,609,111],[25,632,134],[24,687,162],[23,658,180],[23,744,175],[43,749,192],[22,630,221],[10,645,240],[20,682,235],[22,740,246],[41,652,264],[33,449,247],[20,532,292],[35,507,307],[41,668,315],[36,629,345],[30,758,304],[21,764,329],[30,791,238],[54,787,275],[22,854,270]];
for (const [n, x, y] of shields) {
  make('use', { href: '#shield-blue', x, y }, markers);
  make('text', { class: 'marker', x, y: y + 3 }, markers, n);
}
const routes = [['A17',11,138],['A17',57,259],['A2',100,359],['M2',227,358],['A3',581,68],['M1',672,69],['M3',569,160],['M4',719,148],['A7',567,278],['M7',480,351],['M5',456,362],['M3',664,348]];
for (const [n, x, y] of routes) {
  const w = n.length > 2 ? 22 : 18;
  make('rect', { x: x - w / 2, y: y - 5, width: w, height: 11, fill: '#689f38' }, markers);
  make('text', { class: 'marker', x, y: y + 4 }, markers, n);
}
for (const [n, x, y] of [[5,531,82],[2,595,331]]) {
  make('path', { d: `M${x - 7} ${y}l3-6h8l3 6-3 6h-8z`, fill: '#fff', stroke: '#3777c8' }, markers);
  make('text', { class: 'marker blue', x, y: y + 4 }, markers, n);
}
make('path', { d: 'M559 324h14v8q0 4-7 6q-7-2-7-6z', fill: '#fff', stroke: '#777' }, markers);
make('text', { class: 'marker dark', x: 566, y: 334 }, markers, '13');

const places = [['Highvale',280,38],['Mount Nebo',216,59],['Banks Creek',138,94],['England Creek',46,114],['Fernvale',31,166],['Karalee',269,355],['Lone Pine',474,275,'poi','end'],['Koala Sanctuary',474,289,'poi','end'],['Aspley',558,16],['Chermside',580,51],['Nundah',624,80],['Bulwer Island',724,103,'isle'],['Ashgrove',524,149],['Bulimba',621,153],['Brisbane',574,195,'city'],['Toowong',512,213],['Indooroopilly',500,242],['Carindale',699,271],['Sunnybank',627,369],['Fisherman',792,24,'isle'],['Island',793,36,'isle'],['Wynnum',788,146],['Wellington',883,210],['Point',883,222],['Peel Island',1042,239,'isle'],['Cleveland',942,280],['Capalaba',822,297],['Thornlands',928,343],['Coochiemudlo',1020,349],['Island',1020,361],['St',1127,186,'','start'],['Dunwich',1101,237,'','start'],['rgan',0,246,'','start'],['e',1,258,'','start'],['e',1,102,'','start'],['Sp',1,46,'','start'],['Creek',27,57],['slea',0,353,'','start']];
for (const [name, x, y, kind, anchor] of places) {
  make('text', { class: 'place ' + (kind || ''), x, y, 'text-anchor': anchor || 'middle' }, labels, name);
}

// Suburban streets: an uneven grid over the built-up area.
let seed = 11;
const rnd = () => (seed = (seed * 16807) % 2147483647) / 2147483647;
const rows = [];
for (let r = 0; r < 17; r++) {
  rows.push([]);
  for (let c = 0; c < 24; c++) rows[r].push([1190 + c * 62 + rnd() * 44, 20 + r * 66 + rnd() * 44]);
}
let d = '';
const inTown = ([x, y]) => x > 1520 - (y > 650 || y < 240 ? 320 : 100) && !(x > 1970 && x < 2420 && y < 380) && !(x > 2330 && y < 440);
rows.forEach((row, r) => row.forEach((p, c) => {
  for (const q of [row[c + 1], rows[r + 1] && rows[r + 1][c]]) {
    if (q && rnd() < 0.72 && inTown(p) && inTown(q)) d += `M${p.map(Math.round)}L${q.map(Math.round)}`;
  }
}));
make('path', { d }, document.getElementById('minor-roads'));
```
